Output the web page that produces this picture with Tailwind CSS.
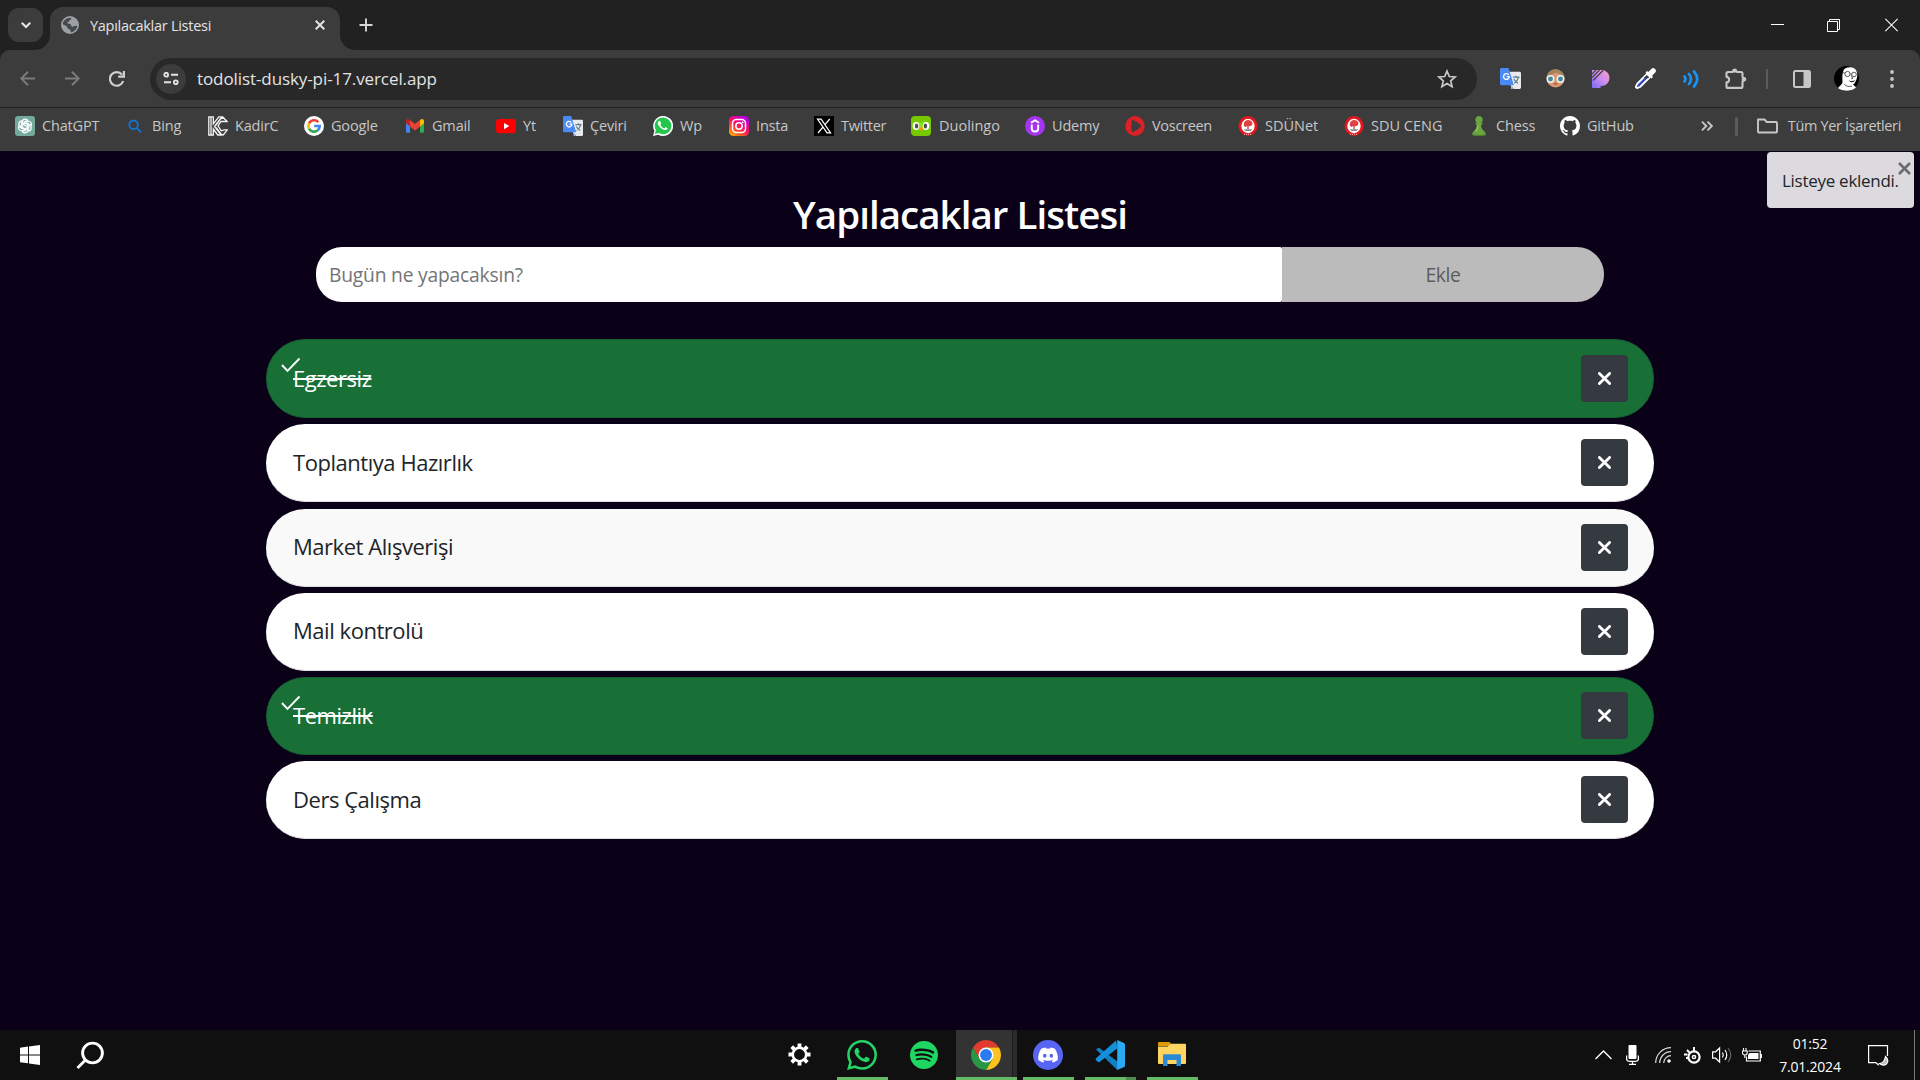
<!DOCTYPE html>
<html lang="tr">
<head>
<meta charset="utf-8">
<title>Yapılacaklar Listesi</title>
<script src="https://cdn.jsdelivr.net/npm/@tailwindcss/browser@4"></script>
</head>
<body class="flex h-[1080px] w-[1920px] flex-col overflow-hidden bg-[#0a0018] font-['Open_Sans','Noto_Sans',sans-serif] text-[#e3e3e3]">

<svg class="hidden">
  <symbol id="x" viewBox="0 0 14 14"><path d="M1.5 1.5l11 11M12.5 1.5l-11 11" fill="none" stroke="currentColor" stroke-width="3" stroke-linecap="round"/></symbol>
  <symbol id="translate" viewBox="0 0 22 22">
    <path d="M8 4h12.500q1.500 0 1.500 1.500v15q0 1.500-1.500 1.500H12z" fill="#e8eaed"/>
    <path d="M11 18l3.500 4-1 .2z" fill="#3367d6"/>
    <path d="M13.500 9.500h7M17 8v1.500M19.500 9.500c-.8 3-2.500 5-4.500 6.500M14.500 11.500c1 2 2.500 3.500 4.500 4.500" fill="none" stroke="#5f7f8c" stroke-width="1.300"/>
    <path d="M1.500 0H9l5.500 18h-13Q0 18 0 16.500v-15Q0 0 1.500 0z" fill="#4a8af4"/>
    <path d="M9.200 7.300A3 3 0 1 0 9.700 9H7" fill="none" stroke="#fff" stroke-width="1.400"/>
  </symbol>
  <symbol id="sdu" viewBox="0 0 20 20">
    <ellipse cx="10" cy="10" rx="9.500" ry="10" fill="#e3171c"/><ellipse cx="10" cy="10" rx="6.700" ry="7.200" fill="#fff"/>
    <path d="M10 4c2.500 0 4.500 1.500 4.500 3.300S13.500 10 12 10.200l-1.300-.2v3.500H9.300V10l-1.800 1C6 10.500 5.500 9 5.800 7.500 6.300 5.500 8 4 10 4z" fill="#e04345"/>
    <path d="M6 13.200h8l-1.200 1.800H7.200z" fill="#8b8b8b"/><path d="M6 18.300h8" stroke="#fff" stroke-width=".7" stroke-dasharray="1 1"/>
  </symbol>
  <symbol id="whatsapp" viewBox="0 0 24 24"><path fill="currentColor" d="M17.472 14.382c-.297-.149-1.758-.867-2.030-.967-.273-.099-.471-.148-.670.150-.197.297-.767.966-.940 1.164-.173.199-.347.223-.644.075-.297-.150-1.255-.463-2.390-1.475-.883-.788-1.480-1.761-1.653-2.059-.173-.297-.018-.458.130-.606.134-.133.298-.347.446-.520.149-.174.198-.298.298-.497.099-.198.050-.371-.025-.520-.075-.149-.669-1.612-.916-2.207-.242-.579-.487-.5-.669-.510-.173-.008-.371-.010-.570-.010-.198 0-.520.074-.792.372-.272.297-1.040 1.016-1.040 2.479 0 1.462 1.065 2.875 1.213 3.074.149.198 2.096 3.200 5.077 4.487.709.306 1.262.489 1.694.625.712.227 1.360.195 1.871.118.571-.085 1.758-.719 2.006-1.413.248-.694.248-1.289.173-1.413-.074-.124-.272-.198-.570-.347m-5.421 7.403h-.004a9.870 9.870 0 01-5.031-1.378l-.361-.214-3.741.982.998-3.648-.235-.374a9.860 9.860 0 01-1.510-5.260c.001-5.450 4.436-9.884 9.888-9.884 2.640 0 5.122 1.030 6.988 2.898a9.825 9.825 0 012.893 6.994c-.003 5.450-4.437 9.884-9.885 9.884m8.413-18.297A11.815 11.815 0 0012.050 0C5.495 0 .160 5.335.157 11.892c0 2.096.547 4.142 1.588 5.945L.057 24l6.305-1.654a11.882 11.882 0 005.683 1.448h.005c6.554 0 11.890-5.335 11.893-11.893a11.821 11.821 0 00-3.480-8.413z"/></symbol>
</svg>

<!-- Tab strip -->
<header class="flex h-[50px] shrink-0 items-end bg-[#202120] pl-2">
  <button class="mb-2 flex h-[34px] w-[35px] items-center justify-center rounded-[11px] bg-[#3c3c3c]">
    <svg class="size-[10px]" viewBox="0 0 10 10" fill="none" stroke="#e3e3e3" stroke-width="2.200"><path d="M.7 2.700L5 7l4.300-4.300"/></svg>
  </button>
  <div class="relative ml-[7px] flex h-[43px] w-[290px] items-center rounded-t-[13px] bg-[#3c3c3c] pb-[7px] pl-[11px] pr-[15px]">
    <svg class="absolute -left-[15px] bottom-0 size-[15px]" viewBox="0 0 15 15"><path d="M15 0v15H0A15 15 0 0 0 15 0z" fill="#3c3c3c"/></svg>
    <svg class="absolute -right-[15px] bottom-0 size-[15px]" viewBox="0 0 15 15"><path d="M0 0v15h15A15 15 0 0 1 0 0z" fill="#3c3c3c"/></svg>
    <svg class="size-[18px]" viewBox="0 0 18 18"><circle cx="9" cy="9" r="9" fill="#9aa0a6"/><path d="M10 1.800c.8 1.200-.3 2-1.300 2.500-.8.400-.4 1.500-1.500 1.700-1 .2-1 .8-.7 1.300.6.900 2.500.2 3.300 1.200.7.900.1 2 1.500 2.200 1.400.100 2-1.200 3.500-1l1.500.2C15.800 13.200 13 16 9.800 16.300c-.5-1 .1-1.700-.6-2.500-.8-.900-2.500-.5-2.700-2C6.400 10.700 5 10 3.800 9.200L1.700 8.300C2 4.800 5 1.700 10 1.800z" fill="#46494c"/></svg>
    <span class="ml-[11px] mt-px grow text-[14.5px] tracking-[-0.27px]">Yapılacaklar Listesi</span>
    <svg class="size-[10px]" viewBox="0 0 10 10" stroke="#e3e3e3" stroke-width="2"><path d="M.7.7l8.600 8.600M9.300.7L.7 9.300"/></svg>
  </div>
  <svg class="mb-[18px] ml-[19px] size-[14px]" viewBox="0 0 14 14" stroke="#d6d6d6" stroke-width="1.900"><path d="M7 .5v13M.5 7h13"/></svg>
  <div class="mb-[18px] ml-auto mr-[22px] flex items-center gap-[43px]" >
    <svg class="h-[14px] w-[13px]" viewBox="0 0 13 14"><path d="M0 6.500h13" stroke="#fff"/></svg>
    <svg class="h-[14px] w-[13px]" viewBox="0 0 13 14" fill="none" stroke="#fff"><path d="M.5 3.500h10v10H.5zM2.500 3.500v-2h10v10h-2"/></svg>
    <svg class="ml-[2px] h-[14px] w-[13px]" viewBox="0 0 13 14" stroke="#fff" stroke-width="1.100"><path d="M.3.800l12.400 12.400M12.700.8L.3 13.200"/></svg>
  </div>
</header>

<!-- Toolbar -->
<div class="shrink-0 bg-[#202120]">
<nav class="flex h-[57px] items-center rounded-t-[10px] bg-[#3c3c3c] pr-[5px]">
  <div class="flex w-[150px] items-center gap-[30px] pl-5">
    <svg class="size-[15px]" viewBox="0 0 15 15" fill="none" stroke="#7b7b7b" stroke-width="2"><path d="M15 7.500H1.500M8 .8L1.300 7.500 8 14.200"/></svg>
    <svg class="size-[15px]" viewBox="0 0 15 15" fill="none" stroke="#7b7b7b" stroke-width="2"><path d="M0 7.500h13.500M7 .8l6.700 6.700L7 14.200"/></svg>
    <svg class="-ml-px size-[16px]" viewBox="0 0 16 16" fill="none" stroke="#cfcfcf" stroke-width="2.200"><path d="M14.200 10A6.800 6.800 0 1 1 13 3.600M14.900 0v5.700H9.200"/></svg>
  </div>
  <div class="flex h-[42px] w-[1327px] items-center rounded-full bg-[#282828] pl-[6px] pr-5">
    <span class="flex size-[30px] items-center justify-center rounded-full bg-[#3c3c3c]">
      <svg class="h-[13px] w-[16px]" viewBox="0 0 16 13" fill="none" stroke="#e3e3e3" stroke-width="1.900"><circle cx="3.200" cy="2.700" r="1.900"/><path d="M8 2.700h7M1 10.300h7"/><circle cx="12.800" cy="10.300" r="1.900"/></svg>
    </span>
    <span class="ml-[11px] mt-px grow text-[17px] tracking-[-0.09px]">todolist-dusky-pi-17.vercel.app</span>
    <svg class="size-5" viewBox="0 0 20 20" fill="none" stroke="#c7c7c7" stroke-width="1.700"><path d="M10 2l2.300 5.500 5.900.5-4.500 3.900 1.400 5.800L10 14.600l-5.100 3.100 1.400-5.800L1.800 8l5.900-.5z"/></svg>
  </div>
  <div class="ml-[11px] grid grid-cols-6 [&>svg]:justify-self-center items-center">
    <svg class="mx-3 size-[21px]"><use href="#translate"/></svg>
    <svg class="size-[19px]" viewBox="0 0 19 19"><circle cx="9.500" cy="9.500" r="9" fill="#d99a73"/><path d="M.5 9A9 9 0 0 1 18.500 9L16 6 10 3.500 3 7z" fill="#a5835a"/><circle cx="4.500" cy="10" r="3.200" fill="#4b8794" stroke="#e8f4f5" stroke-width="1.500"/><circle cx="14.500" cy="10" r="3.200" fill="#4b8794" stroke="#e8f4f5" stroke-width="1.500"/><path d="M7.500 14.800h4" stroke="#a9543c" stroke-width="1.300"/></svg>
    <svg class="size-[18px]" viewBox="0 0 18 18"><defs><linearGradient id="pg" x1="1" y1="0" x2="0" y2="1"><stop offset="0" stop-color="#ff9ec4"/><stop offset=".5" stop-color="#c98cf0"/><stop offset="1" stop-color="#7a6bf5"/></linearGradient></defs><path d="M0 0h9.500a8 8 0 0 1 0 16l-1 .2V18H0z" fill="url(#pg)"/><path d="M0 4L4 0M0 7.500L7.500 0M1 10.500L11 .5" stroke="#3c3c3c" stroke-width="1.100"/></svg>
    <svg class="size-[21px]" viewBox="0 0 21 21"><path d="M2 16L12 6l3 3L5 19l-3 1.200L.8 19z" fill="#2c46c4" stroke="#fff" stroke-width="1.800" stroke-linejoin="round"/><path d="M10.500 4.500l6 6 1.500-1.500-1-1.200 3-3A2.500 2.500 0 0 0 16.300 1l-3 3L12 3z" fill="#fff"/><path d="M8.500 10.200l3.300-3.300 2.300 2.300-1 1z" fill="#3c3c3c"/></svg>
    <svg class="h-[18px] w-4" viewBox="0 0 16 18" fill="none" stroke="#1693f5" stroke-width="2.700" stroke-linecap="round"><path d="M1.500 6.500q2 2.500 0 5M6 4q4 5 0 10M11 1.500q6.500 7.500 0 15"/></svg>
    <svg class="h-[21px] w-[22px]" viewBox="0 0 22 21"><path d="M3 4h4.500a2.300 2.300 0 0 1 4.400 0H16q1.500 0 1.500 1.500V9a2.300 2.300 0 0 1 0 4.400v5q0 1.500-1.500 1.500H3q-1.500 0-1.500-1.500v-4c3.500-.3 3.500-5.100 0-5.400V5.500Q1.500 4 3 4z" fill="none" stroke="#c7c7c7" stroke-width="2.100" stroke-linejoin="round"/><circle cx="9.700" cy="2.600" r="2.200" fill="#c7c7c7"/><circle cx="19" cy="11.200" r="2.200" fill="#c7c7c7"/></svg>
  </div>
  <span class="ml-auto h-5 w-[2px] bg-[#5c5c5c]"></span>
  <div class="ml-[11px] mr-px grid grid-cols-[45px_45px_45px] items-center justify-items-center">
    <svg class="size-[18px]" viewBox="0 0 18 18"><rect x="1" y="1" width="16" height="16" rx="1.500" fill="none" stroke="#c7c7c7" stroke-width="2"/><path d="M10.500 1H17v16h-6.500z" fill="#c7c7c7"/></svg>
    <svg class="size-[25px]" viewBox="0 0 25 25"><circle cx="12.500" cy="12.500" r="12.500" fill="#000"/><path d="M9.500 4.500C11 .8 17 .3 20.500 2.500c2.700 2 3.200 6 2.500 9s-2 6-4 7c1 1 2.500 2 3 3-5 4.300-13.500 4-18 .5 1.500-2 4-3.500 4.500-5.500C8.500 14 7.800 9 9.500 4.500z" fill="#fff"/><g fill="none" stroke="#333" stroke-width=".8"><circle cx="13.500" cy="8" r="2.600"/><circle cx="20" cy="8.500" r="2.300"/><path d="M10.800 7L8.500 6.500M16.200 8h1.500M17.500 9.500l1.200 3-1.500.3M10 18c2 2.500 5 3 8 2"/></g><path d="M14.500 14.200q4 2 7-.5-1.500 3-4 2.600-2-.5-3-2.100z" fill="#222"/></svg>
    <svg class="h-[18px] w-1" viewBox="0 0 4 18" fill="#c7c7c7"><circle cx="2" cy="2" r="1.900"/><circle cx="2" cy="9" r="1.900"/><circle cx="2" cy="16" r="1.900"/></svg>
  </div>
</nav>
</div>

<!-- Bookmarks bar -->
<nav class="flex h-11 shrink-0 items-center border-t border-[#202120] bg-[#3c3c3c] pb-[7px] pl-[15px] text-[14.5px] tracking-[-0.17px] text-[#c7c7c7]">
  <a class="flex w-[110px] items-center gap-[7px]"><svg class="size-5" viewBox="0 0 20 20"><rect width="20" height="20" rx="3" fill="#74aa9c"/><g fill="none" stroke="#fff" stroke-width="1.150"><path d="M7.300 11.300V6.300q0-2.900 2.900-3.200 1.500 0 2.500 1L8.800 6.400v2.200l4.100 2.400"/><path d="M7.300 11.300V6.300q0-2.900 2.900-3.200 1.500 0 2.500 1L8.800 6.400v2.200" transform="rotate(60 10 10)"/><path d="M7.300 11.300V6.300q0-2.900 2.900-3.200 1.500 0 2.500 1L8.800 6.400v2.200" transform="rotate(120 10 10)"/><path d="M7.300 11.300V6.300q0-2.900 2.900-3.200 1.500 0 2.500 1L8.800 6.400v2.200" transform="rotate(180 10 10)"/><path d="M7.300 11.300V6.300q0-2.900 2.900-3.200 1.500 0 2.500 1L8.800 6.400v2.200" transform="rotate(240 10 10)"/><path d="M7.300 11.300V6.300q0-2.900 2.900-3.200 1.500 0 2.500 1L8.800 6.400v2.200" transform="rotate(300 10 10)"/></g></svg>ChatGPT</a>
  <a class="flex w-[83px] items-center gap-[7px]"><svg class="size-5" viewBox="0 0 20 20" fill="none" stroke="#1273d0" stroke-width="1.900"><circle cx="8.600" cy="8.800" r="4.300"/><path d="M11.800 12l4.300 4.300"/></svg>Bing</a>
  <a class="flex w-[96px] items-center gap-[7px]"><svg class="size-5" viewBox="0 0 20 20" fill="none" stroke="#f4f4f4" stroke-width="1.300"><path d="M.8.800h4.500v7L10.800.8h3L8 8.500l-1.500 2L13.300 19h-3.500L5.300 13v6H.8zM3 1v18M8 9l4-5.500 3-2.300 4 4.300h-3.500L13 5.500 10 9.800l3.300 5 3-1H19.300l-4 5.200-2.300-1L8 11.500"/></svg>KadirC</a>
  <a class="flex w-[101px] items-center gap-[7px]"><svg class="size-5" viewBox="0 0 20 20"><circle cx="10" cy="10" r="10" fill="#fff"/><g fill="none" stroke-width="2.600"><path d="M14.300 6.200A5.700 5.700 0 0 0 5 7.300" stroke="#ea4335"/><path d="M5 7.300a5.700 5.700 0 0 0 0 5.400" stroke="#fbbc05"/><path d="M5 12.700a5.700 5.700 0 0 0 8.800 1.600" stroke="#34a853"/><path d="M13.800 14.300A5.700 5.700 0 0 0 15.700 10H10.200" stroke="#4285f4"/></g></svg>Google</a>
  <a class="flex w-[91px] items-center gap-[7px]"><svg class="size-5" viewBox="0 0 20 20"><path d="M1 5v10.500q0 1.300 1.300 1.300H5V8z" fill="#4285f4"/><path d="M19 5v10.500q0 1.300-1.300 1.300H15V8z" fill="#34a853"/><path d="M15 4l1-.6c1.300-1 3 0 3 1.600v2.200L15 10.500z" fill="#fbbc04"/><path d="M5 4l-1-.6C2.700 2.400 1 3.400 1 5v2.200l4 3.300z" fill="#c5221f"/><path d="M5 10.500V4l5 4 5-4v6.500l-5 4z" fill="#ea4335"/></svg>Gmail</a>
  <a class="flex w-[67px] items-center gap-[7px]"><svg class="size-5" viewBox="0 0 20 20"><rect y="3" width="20" height="14.300" rx="3.300" fill="#f00"/><path d="M8 7l5.300 3.100L8 13.200z" fill="#fff"/></svg>Yt</a>
  <a class="flex w-[90px] items-center gap-[7px]"><svg class="size-5"><use href="#translate"/></svg>Çeviri</a>
  <a class="flex w-[76px] items-center gap-[7px]"><svg class="size-5" viewBox="0 0 24 24"><path d="M0 24l1.700-6.200A12 12 0 1 1 6.300 22.400z" fill="#fff"/><path d="M2.200 21.700l1.300-4.600A10 10 0 1 1 7 20.500z" fill="#25c64c"/><path d="M17.500 14.400c-.3-.2-1.800-.9-2-1s-.5-.1-.7.200l-.9 1.100c-.2.200-.4.300-.7.100-2-.9-3.300-2-4.300-3.900-.1-.3 0-.4.300-.7l.6-.9c0-.2 0-.4-.1-.5l-1-2.300c-.2-.6-.5-.5-.7-.5h-.6c-2.200 1-2 3.300-.6 5.300 1.500 2.200 3.300 3.900 5.500 4.800 2.500 1.100 3.300.8 4.400.200.9-.6 1.100-1.500.8-1.900z" fill="#fff"/></svg>Wp</a>
  <a class="flex w-[85px] items-center gap-[7px]"><svg class="size-5" viewBox="0 0 20 20"><defs><linearGradient id="ig" x1="0" y1="1" x2=".7" y2="0"><stop offset="0" stop-color="#ffc800"/><stop offset=".3" stop-color="#ff5a20"/><stop offset=".6" stop-color="#ff0a6c"/><stop offset="1" stop-color="#b900e8"/></linearGradient></defs><rect width="20" height="20" rx="4.500" fill="url(#ig)"/><g fill="none" stroke="#fff" stroke-width="1.500"><rect x="3.500" y="3.500" width="13" height="13" rx="3.800"/><circle cx="10" cy="10" r="3.200"/></g><circle cx="13.700" cy="6.300" r=".9" fill="#fff"/></svg>Insta</a>
  <a class="flex w-[97px] items-center gap-[7px] tracking-[-0.3px]"><svg class="size-5" viewBox="0 0 20 20"><path d="M0 0h20v20H0z" fill="#000"/><path d="M3.500 3.200h3.600l9.500 13.600H13zM15.700 3L10.800 8.800M9 11l-5 6" fill="none" stroke="#fff" stroke-width="1.200"/></svg>Twitter</a>
  <a class="flex w-[114px] items-center gap-2 tracking-normal"><svg class="size-5" viewBox="0 0 20 20"><rect width="20" height="20" rx="4" fill="#78c800"/><path d="M1.500 7Q6 4 10 7q4-3 8.500 0v4q-4 5-8.500 2Q5.500 16 1.500 11z" fill="#89e219"/><ellipse cx="5" cy="10" rx="3.200" ry="4" fill="#fff"/><ellipse cx="15" cy="10" rx="3.200" ry="4" fill="#fff"/><ellipse cx="5.600" cy="10" rx="1.700" ry="2.500" fill="#4b4b4b"/><ellipse cx="14.400" cy="10" rx="1.700" ry="2.500" fill="#4b4b4b"/><path d="M8 11.800q2-1.300 4 0-.5 2.700-2 2.700t-2-2.700z" fill="#ff9600"/></svg>Duolingo</a>
  <a class="flex w-[100px] items-center gap-[7px]"><svg class="size-5" viewBox="0 0 20 20"><circle cx="10" cy="10" r="10" fill="#a435f0"/><path d="M6.800 8.500v4.300q.3 2.700 3.200 2.700t3.200-2.700V8.500M6 6.800l4-2.500 4 2.500" fill="none" stroke="#fff" stroke-width="1.900"/></svg>Udemy</a>
  <a class="flex w-[113px] items-center gap-[7px] tracking-[-0.3px]"><svg class="size-5" viewBox="0 0 20 20"><ellipse cx="10" cy="10" rx="9.700" ry="10" fill="#dd1f26"/><path d="M7 3.500q-1.500 6.500 0 13 5.500-2 9.500-6.500-4-4.500-9.500-6.500z" fill="#3c3c3c"/></svg>Voscreen</a>
  <a class="flex w-[106px] items-center gap-[7px] tracking-normal"><svg class="size-5"><use href="#sdu"/></svg>SDÜNet</a>
  <a class="flex w-[125px] items-center gap-[7px] tracking-normal"><svg class="size-5"><use href="#sdu"/></svg>SDU CENG</a>
  <a class="flex w-[91px] items-center gap-[7px]"><svg class="size-5" viewBox="0 0 20 20"><path d="M10 0a3.700 3.700 0 0 1 2.300 6.600l1.700 1.700-2 .5c.2 3 1 4.500 3 6.200 1.200 1.200 2 2.500 1.700 4q-3 1-6.700 1t-6.700-1C3 17.500 3.800 16.200 5 15c2-1.700 2.800-3.200 3-6.200l-2-.5 1.700-1.700A3.700 3.700 0 0 1 10 0z" fill="#6aa542"/><path d="M3.300 18Q10 20 16.700 18v1.200Q10 20.800 3.300 19.200z" fill="#4b7d2b"/><path d="M8 9c0 3-1 5-3 6.500l3-.5q1.500-2.500 1.500-6z" fill="#86c455"/></svg>Chess</a>
  <a class="flex items-center gap-[7px]"><svg class="size-5" viewBox="0 0 16 16"><path fill="#fff" d="M8 0C3.580 0 0 3.580 0 8c0 3.540 2.290 6.530 5.470 7.590.4.070.55-.17.55-.38 0-.19-.01-.82-.01-1.490-2.010.37-2.530-.49-2.690-.94-.09-.23-.48-.94-.82-1.130-.28-.15-.68-.52-.01-.53.63-.01 1.080.58 1.230.82.72 1.210 1.870.87 2.330.66.07-.52.28-.87.51-1.070-1.780-.2-3.640-.89-3.640-3.950 0-.87.31-1.590.82-2.150-.08-.2-.36-1.020.08-2.120 0 0 .67-.21 2.200.82.64-.18 1.320-.27 2-.27s1.360.09 2 .27c1.530-1.040 2.200-.82 2.200-.82.44 1.100.16 1.920.08 2.120.51.56.82 1.270.82 2.150 0 3.070-1.870 3.750-3.650 3.950.29.25.54.73.54 1.480 0 1.070-.01 1.930-.01 2.200 0 .21.15.46.55.38A8.010 8.010 0 0 0 16 8c0-4.420-3.580-8-8-8z"/></svg>GitHub</a>
  <div class="ml-auto mr-[19px] flex items-center tracking-[-0.36px]">
    <svg class="mr-[22px] h-[10px] w-[12px]" viewBox="0 0 12 10" fill="none" stroke="#c7c7c7" stroke-width="1.900"><path d="M1 .7L5.300 5 1 9.300M6.500.7L10.800 5 6.500 9.300"/></svg>
    <span class="mr-[19px] h-[19px] w-[3px] rounded bg-[#5c5c5c]"></span>
    <svg class="mr-[10px] h-4 w-[21px]" viewBox="0 0 21 16" fill="none" stroke="#c7c7c7" stroke-width="1.900"><path d="M1 1.500h6.500L9.700 4H19q1 0 1 1v8.500q0 1-1 1H2q-1 0-1-1z" stroke-linejoin="round"/></svg>
    <span>Tüm Yer İşaretleri</span>
  </div>
</nav>

<!-- Page -->
<main class="relative flex grow flex-col items-center pt-[39px]">
  <h1 class="h-[57px] text-[38.5px] font-semibold leading-[48px] tracking-[-0.97px] text-white">Yapılacaklar Listesi</h1>
  <form class="flex h-[55px] w-[1288px] text-[19.3px] tracking-[-0.22px]">
    <label class="flex w-[966px] items-center rounded-l-[26px] rounded-r-[2px] bg-white pl-[13px] pt-px text-[#757575]">Bugün ne yapacaksın?</label>
    <button type="button" class="w-[322px] rounded-r-[27px] bg-[#bbbbbb] pt-px tracking-[-0.4px] text-[#5d5d60]">Ekle</button>
  </form>
  <ul id="todos" class="mt-[37px] flex w-[1388px] flex-col gap-[6px] text-[22px] tracking-[-0.46px] text-[#212529]"></ul>

  <div class="absolute right-[6px] top-px flex h-14 w-[147px] items-center rounded-[4px] bg-[#dcdadf] pl-[15px] text-[17px] tracking-[-0.28px] text-[#212529]">
    <span class="mt-[2px] whitespace-nowrap">Listeye eklendi.</span>
    <svg class="absolute right-[3px] top-[10px] size-[13px]" viewBox="0 0 13 13" stroke="#6c6b6e" stroke-width="2.600"><path d="M1 1l11 11M12 1L1 12"/></svg>
  </div>
</main>

<!-- Taskbar -->
<footer class="relative flex h-[50px] shrink-0 items-center bg-[#101010]">
  <div class="flex w-[775px] items-center pl-5">
    <svg class="size-5" viewBox="0 0 20 20" fill="#fff"><path d="M0 2.700l8-1.100V9.400H0zM9 1.500L20 0v9.400H9zM0 10.400h8v7.900l-8-1.100zM9 10.400h11V20L9 18.500z"/></svg>
    <svg class="ml-9 size-[29px]" viewBox="0 0 29 29" fill="none" stroke="#fff" stroke-width="2.900"><circle cx="16.500" cy="12" r="9.900"/><path d="M9.500 19l-8 8"/></svg>
  </div>
  <div class="flex h-full gap-[11px]">
    <span class="flex w-[51px] items-center justify-center"><svg class="mr-[2px] mb-[2px] size-[23px]" viewBox="0 0 24 24"><g stroke="#fff" stroke-width="4"><path d="M12 .5v23" stroke-dasharray="5 13"/><path d="M12 .5v23" stroke-dasharray="5 13" transform="rotate(45 12 12)"/><path d="M12 .5v23" stroke-dasharray="5 13" transform="rotate(90 12 12)"/><path d="M12 .5v23" stroke-dasharray="5 13" transform="rotate(135 12 12)"/></g><circle cx="12" cy="12" r="7" fill="#101010" stroke="#fff" stroke-width="2.600"/></svg></span>
    <span class="flex w-[51px] items-center justify-center border-b-[3px] border-[#66b966] pt-[3px]"><svg class="mr-px size-[30px] text-[#25d366]"><use href="#whatsapp"/></svg></span>
    <span class="flex w-[51px] items-center justify-center"><svg class="mr-[2px] size-7" viewBox="0 0 24 24" fill="#1ed760"><path d="M12 0C5.400 0 0 5.400 0 12s5.400 12 12 12 12-5.400 12-12S18.660 0 12 0zm5.521 17.340c-.240.359-.660.480-1.021.240-2.820-1.740-6.360-2.101-10.561-1.141-.418.122-.779-.179-.899-.539-.120-.421.180-.780.540-.900 4.560-1.021 8.520-.600 11.640 1.320.420.180.479.659.301 1.020zm1.440-3.300c-.301.420-.841.600-1.262.300-3.239-1.980-8.159-2.580-11.939-1.380-.479.120-1.020-.120-1.140-.600-.120-.480.120-1.021.600-1.141C9.600 9.900 15 10.561 18.720 12.840c.361.181.540.780.241 1.200zm.120-3.360C15.240 8.400 8.820 8.160 5.160 9.301c-.600.179-1.200-.181-1.380-.721-.180-.601.180-1.200.720-1.381 4.260-1.260 11.280-1.020 15.721 1.621.539.300.719 1.020.419 1.560-.299.421-1.020.599-1.559.300z"/></svg></span>
    <span class="-ml-[5px] -mr-[5px] flex w-[61px] border-b-[3px] border-[#66b966]"><span class="flex w-[57px] items-center justify-center border-r border-[#1c1c1c] bg-[#333] pl-1 pt-[3px]"><svg class="size-[30px]" viewBox="2 2 44 44"><path d="M4.950 13A22 22 0 0 1 43.050 13H24v11l-9.530 5.500z" fill="#e33b2e"/><path d="M43.050 13A22 22 0 0 1 24 46l9.530-16.500L24 24V13z" fill="#fcc31e"/><path d="M24 46A22 22 0 0 1 4.950 13l9.520 16.500L24 24l9.530 5.500z" fill="#2a9647"/><circle cx="24" cy="24" r="11" fill="#fff"/><circle cx="24" cy="24" r="8.700" fill="#2a7bf0"/></svg></span><span class="grow bg-[#2a2a2a]"></span></span>
    <span class="flex w-[51px] items-center justify-center border-b-[3px] border-[#66b966] pt-[3px]"><svg class="mr-px size-[30px]" viewBox="0 0 30 30"><circle cx="15" cy="15" r="15" fill="#5865f2"/><path transform="translate(5.200 5.200) scale(.82)" fill="#fff" d="M20.317 4.370a19.791 19.791 0 00-4.885-1.515.074.074 0 00-.079.037c-.211.375-.445.865-.608 1.250a18.270 18.270 0 00-5.487 0 12.640 12.640 0 00-.618-1.250.077.077 0 00-.079-.037A19.736 19.736 0 003.677 4.370a.070.070 0 00-.032.027C.533 9.046-.320 13.580.099 18.058a.082.082 0 00.031.056 19.900 19.900 0 005.993 3.030.078.078 0 00.084-.028c.462-.630.874-1.295 1.226-1.994a.076.076 0 00-.042-.106 13.107 13.107 0 01-1.872-.892.077.077 0 01-.008-.128c.126-.094.252-.192.372-.291a.074.074 0 01.078-.010c3.927 1.793 8.180 1.793 12.061 0a.074.074 0 01.079.009c.120.099.245.198.372.292a.077.077 0 01-.006.128 12.299 12.299 0 01-1.873.891.077.077 0 00-.041.107c.360.698.772 1.363 1.225 1.993a.076.076 0 00.084.029 19.839 19.839 0 006.002-3.030.077.077 0 00.031-.055c.5-5.177-.838-9.674-3.549-13.660a.061.061 0 00-.031-.029zM8.020 15.331c-1.182 0-2.157-1.086-2.157-2.419s.956-2.419 2.157-2.419c1.210 0 2.176 1.095 2.157 2.419 0 1.333-.956 2.419-2.157 2.419zm7.975 0c-1.183 0-2.157-1.086-2.157-2.419s.955-2.419 2.157-2.419c1.210 0 2.176 1.095 2.157 2.419 0 1.333-.946 2.419-2.157 2.419z"/></svg></span>
    <span class="relative flex w-[51px] items-center justify-center border-b-[3px] border-[#66b966] pt-[3px]"><svg class="mr-[2px] size-[30px]" viewBox="0 0 30 30"><path d="M1 9.500L3 8q.7-.4 1.500 0L23 22v7.500l-1 .3z" fill="#0f7fc6"/><path d="M.8 18.600L21 .5l1.500 7.700L4.500 22q-.8.400-1.400 0L1 20.300q-.7-.8-.2-1.700z" fill="#148fd8"/><path d="M22.200 0l6.800 3q1 .5 1 1.600v20.800q0 1.100-1 1.600l-6.800 3z" fill="#2aaaf3"/></svg><span class="absolute -bottom-[3px] right-0 h-[3px] w-[10px] bg-[#4d8b4d]"></span></span>
    <span class="flex w-[51px] items-center justify-center border-b-[3px] border-[#66b966]"><svg class="mr-px h-6 w-7" viewBox="0 0 28 24"><path d="M1 0h10q1 0 1.500 1l.8 3H0V1q0-1 1-1z" fill="#e09a07"/><path d="M0 4.500h9.500L13 1.700h14q1 0 1 1V21q0 1-1 1H1q-1 0-1-1z" fill="#ffd461"/><path d="M5 24V13.500q0-1.200 1.200-1.200h15.600q1.200 0 1.200 1.200V24h-4.500v-6h-9v6z" fill="#2b8ad6"/></svg></span>
  </div>
  <div class="absolute right-0 flex h-full items-center text-white">
    <svg class="h-[10px] w-[17px]" viewBox="0 0 17 10" fill="none" stroke="#fff" stroke-width="1.400"><path d="M.5 9l8-8 8 8"/></svg>
    <svg class="ml-[14px] h-5 w-[13px]" viewBox="0 0 13 20" fill="none" stroke="#fff" stroke-width="1.300"><rect x="2.500" y="0" width="8" height="14" rx="1" fill="#fff" stroke="none"/><path d="M.6 10.500v3.300q0 2.500 2.500 2.500h6.800q2.500 0 2.500-2.500v-3.300M6.500 16.500v3M3 19.300h7"/></svg>
    <svg class="ml-4 size-4" viewBox="0 0 16 16" fill="none" stroke="#d8d8d8" stroke-width="1.200"><path d="M.7 16A15.300 15.300 0 0 1 16 .7M4.700 16A11.300 11.300 0 0 1 16 4.700M8.700 16A7.300 7.300 0 0 1 16 8.700"/><circle cx="14" cy="14" r="1.800" fill="#fff" stroke="none"/></svg>
    <svg class="ml-[13px] h-[17px] w-[17px]" viewBox="0 0 17 17" fill="none" stroke="#fff"><circle cx="10" cy="10" r="5.600" stroke-width="2.200"/><circle cx="10" cy="10" r="1.600" stroke-width="1.500"/><path d="M10 0v4M3 3l2.500 2.500M0 7.500h3.500M2 11h3" stroke-width="1.900"/></svg>
    <svg class="ml-[11px] h-[18px] w-[21px]" viewBox="0 0 21 18" fill="none" stroke="#fff" stroke-width="1.200"><path d="M.6 5.800h3l4-3.800v14l-4-3.800h-3zM10.500 6.500q1.500 2.500 0 5M13 4q3.500 5 0 10"/><path d="M16 2q5.500 7 0 14" stroke="#666"/></svg>
    <svg class="ml-[9px] h-[14px] w-5" viewBox="0 0 20 14" fill="none" stroke="#fff" stroke-width="1.200"><path d="M6.500 3h11.800v10H4.500V8.500M19.300 6v4"/><path d="M7.500 5h9v6H6V7z" fill="#fff" stroke="none"/><path d="M1.500 0v3M4 0v3M.5 3h4.700v2.500q-.5 1.500-2.300 1.500T.5 5.500zM2.800 7v3" stroke-width="1.100"/></svg>
    <div class="ml-[17px] flex w-[62px] flex-col items-center whitespace-nowrap text-[14px] leading-[23px] tracking-[-0.22px]"><span>01:52</span><span>7.01.2024</span></div>
    <svg class="ml-[27px] h-[21px] w-[21px]" viewBox="0 0 21 21" fill="none" stroke="#fff" stroke-width="1.200"><path d="M19.500 11V.6H.6v17h7.200l3 2.600"/><path d="M17.500 11.500q4 3.500 1 7.500-3.500 2.500-7-.5 5-.5 6-7z" fill="#bbb"/></svg>
    <span class="ml-[25px] h-full w-px bg-[#7a7a7a]"></span>
    <span class="w-[5px]"></span>
  </div>
</footer>

<template id="row">
  <li class="group relative flex h-[78px] items-center justify-between rounded-[39px] border-b border-[#dfdfe2] bg-white px-[26px] first:h-[79px] nth-2:mb-px nth-3:bg-[#f9f9f9] nth-5:pb-px data-done:border data-done:border-[#156131] data-done:bg-[#187037] data-done:px-[25px] data-done:text-white">
    <span class="title ml-px group-nth-3:mb-[2px] group-nth-4:mb-[2px] group-data-done:line-through group-data-done:decoration-2"></span>
    <button class="flex size-[47px] items-center justify-center rounded-[4px] bg-[#343a40] text-white"><svg class="size-[13px]"><use href="#x"/></svg></button>
  </li>
</template>
<template id="tick">
  <svg class="absolute left-[14px] top-[17px] h-4 w-5" viewBox="0 0 20 16" fill="none" stroke="#fff" stroke-width="1.900"><path d="M1 8l5.500 5.800L18.500 1.500"/></svg>
</template>
<script>
  const todos = [
    ['Egzersiz', true], ['Toplantıya Hazırlık', false], ['Market Alışverişi', false],
    ['Mail kontrolü', false], ['Temizlik', true], ['Ders Çalışma', false]
  ];
  const list = document.getElementById('todos');
  for (const [text, done] of todos) {
    const li = document.getElementById('row').content.firstElementChild.cloneNode(true);
    li.querySelector('.title').textContent = text;
    if (done) {
      li.dataset.done = '1';
      li.append(document.getElementById('tick').content.cloneNode(true));
    }
    list.append(li);
  }
</script>
</body>
</html>
